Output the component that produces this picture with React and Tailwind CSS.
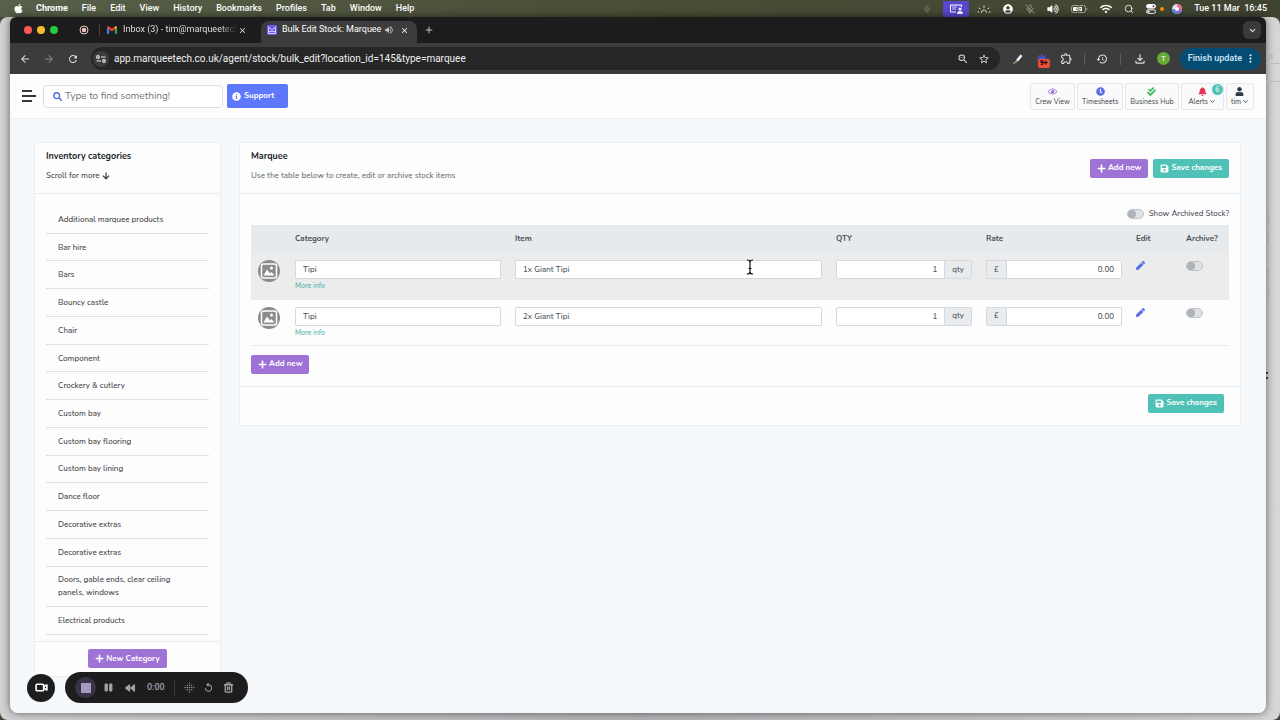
import React, { useState } from 'react';
import {
  FaApple,
  FaArrowDown,
  FaBackward,
  FaBell,
  FaCheckDouble,
  FaClock,
  FaInfoCircle,
  FaPause,
  FaPen,
  FaPlus,
  FaRegEye,
  FaSave,
  FaSearch,
  FaUser,
  FaUserCircle,
  FaVolumeUp,
  FaWifi,
} from 'react-icons/fa';
import {
  MdArrowBack,
  MdArrowForward,
  MdClose,
  MdHistory,
  MdMoreVert,
  MdOutlineExtension,
  MdOutlineFileDownload,
  MdRefresh,
  MdReplay,
  MdStarBorder,
  MdVolumeUp,
  MdZoomOut,
} from 'react-icons/md';
import { ChevronDown, Mic, MicOff, Plus, Search, Trash2, Video } from 'lucide-react';

const MENUS = ['File', 'Edit', 'View', 'History', 'Bookmarks', 'Profiles', 'Tab', 'Window', 'Help'];

const CATEGORIES = [
  'Additional marquee products',
  'Bar hire',
  'Bars',
  'Bouncy castle',
  'Chair',
  'Component',
  'Crockery & cutlery',
  'Custom bay',
  'Custom bay flooring',
  'Custom bay lining',
  'Dance floor',
  'Decorative extras',
  'Decorative extras',
  'Doors, gable ends, clear ceiling panels, windows',
  'Electrical products',
];

const STOCK = [
  { id: 1, category: 'Tipi', item: '1x Giant Tipi', qty: '1', rate: '0.00' },
  { id: 2, category: 'Tipi', item: '2x Giant Tipi', qty: '1', rate: '0.00' },
];

function MenuBar() {
  return (
    <div className="flex h-[17px] shrink-0 items-center bg-linear-to-r from-[#56604a] via-[#4b4d35] to-[#3f4432] pr-[13px] pl-[13px] text-[9px] font-medium text-white">
      <FaApple className="mr-3 h-[11px] w-[11px]" />
      <nav aria-label="Application menu" className="flex items-center gap-[14px]">
        <span className="font-bold">Chrome</span>
        {MENUS.map((menu) => (
          <span key={menu}>{menu}</span>
        ))}
      </nav>
      <div className="ml-auto flex items-center gap-3">
        <Mic className="h-2 w-2 opacity-30" />
        <span className="flex h-4 w-[26px] items-center justify-center bg-[#5848d0]">
          <svg viewBox="0 0 14 10" className="h-[10px] w-[14px]" fill="none" stroke="currentColor">
            <path d="M7 8H1.5V1h11v2" />
            <path d="M3 3h5M3 5h4" strokeWidth=".7" />
            <circle cx="11" cy="5" r="1.5" fill="currentColor" stroke="none" />
            <path d="M8 10c0-4 6-4 6 0z" fill="currentColor" stroke="none" />
          </svg>
        </span>
        <svg viewBox="0 0 14 10" className="-ml-1 h-[10px] w-[14px]" fill="none" stroke="currentColor" strokeLinecap="round">
          <path d="M1 8h.8M12.200 8h.8M2.200 4l.8.8M11.800 4l-.8.800M7 2v1.200" />
          <path d="M4.500 8.500a2.500 2.500 0 0 1 5 0" strokeDasharray="1.500 1" />
        </svg>
        <FaUserCircle className="h-[10px] w-[10px]" />
        <MicOff className="h-[10px] w-[10px] opacity-50" />
        <FaVolumeUp className="h-[10px] w-3" />
        <svg viewBox="0 0 17 10" className="h-[10px] w-[17px]">
          <rect x=".5" y="1.500" width="14" height="7" rx="2" fill="none" stroke="#a5a792" />
          <path d="M2 3h9v4H2z" fill="#fff" />
          <path d="M15.500 4v2q1 0 1-1t-1-1z" fill="#a5a792" />
          <path d="M8.500 1L5 5.500h2.500L6.500 9 10 4.500H7.500z" fill="#fff" stroke="#454832" strokeWidth=".6" />
        </svg>
        <FaWifi className="h-[10px] w-3" />
        <Search className="h-[10px] w-[10px]" />
        <span className="flex items-center gap-1">
          <svg viewBox="0 0 10 10" className="h-[10px] w-[10px]" fill="none" stroke="currentColor">
            <rect x=".5" y=".5" width="9" height="3.600" rx="1.800" fill="currentColor" />
            <rect x=".5" y="5.800" width="9" height="3.600" rx="1.800" />
            <circle cx="7.500" cy="2.300" r="1" fill="#454832" stroke="none" />
            <circle cx="2.500" cy="7.600" r="1.200" fill="currentColor" stroke="none" />
          </svg>
          <span className="h-1 w-1 rounded-full bg-orange-400" />
        </span>
        <svg viewBox="0 0 10 10" className="-ml-1 h-[10px] w-[10px]">
          <circle cx="5" cy="5" r="5" fill="#e8dcf0" />
          <path d="M5 0a5 5 0 0 1 5 5H5z" fill="#ef6a8d" />
          <path d="M0 5a5 5 0 0 0 5 5V5z" fill="#4b93ea" />
          <path d="M5 10a5 5 0 0 0 5-5H5z" fill="#a864dc" />
          <circle cx="5" cy="5" r="2" fill="#fff" />
        </svg>
        <span className="whitespace-pre">Tue 11 Mar  16:45</span>
      </div>
    </div>
  );
}

function TabStrip() {
  return (
    <div className="flex h-[26px] items-end bg-[#1c1c1c] pr-[5px] text-[9px] text-[#dedede]">
      <div className="flex h-full items-center gap-[5px] pl-[14px]">
        <span className="h-2 w-2 rounded-full bg-[#fb5b57]" />
        <span className="h-2 w-2 rounded-full bg-[#f9bc2e]" />
        <span className="h-2 w-2 rounded-full bg-[#2bc840]" />
      </div>
      <div className="ml-[21px] flex h-full items-center">
        <svg viewBox="0 0 10 10" className="h-[10px] w-[10px]">
          <circle cx="5" cy="5" r="4" fill="none" stroke="#e9c6c8" />
          <circle cx="5" cy="5" r="2.200" fill="#f0c4c6" />
        </svg>
        <span className="ml-[10px] h-3 w-px bg-[#4a4037]" />
      </div>
      <div className="flex h-full w-[161px] items-center pl-[7px]">
        <svg viewBox="0 0 12 9" className="mr-[6px] h-2 w-[10px] shrink-0">
          <path d="M0 1.500V9h2.600V4.200z" fill="#4285f4" />
          <path d="M12 1.500V9H9.400V4.200z" fill="#34a853" />
          <path d="M0 1.500C0 0 1.500-.5 2.600.4L6 3l3.400-2.600v3.300L6 6.300 0 2z" fill="#ea4335" />
          <path d="M9.400.4C10.500-.5 12 0 12 1.500V2L9.400 4z" fill="#fbbc04" />
        </svg>
        <span className="w-[114px] mask-r-from-85% whitespace-nowrap">Inbox (3) - tim@marqueetech</span>
        <button aria-label="Close Inbox tab" className="ml-px">
          <MdClose className="h-[9px] w-[9px]" />
        </button>
      </div>
      <div className="flex h-[22px] w-[156px] items-center rounded-t-lg bg-[#3c3c3c] pb-1 pl-[6px] text-white">
        <svg viewBox="0 0 10 10" className="mr-[5px] h-[10px] w-[10px] shrink-0">
          <rect width="10" height="10" rx="1" fill="#6a5cf0" />
          <path d="M1.500 8.500V2L5 5l3.500-3v6.500zM2 6.500h6" fill="none" stroke="#d9d4ff" strokeWidth=".9" />
        </svg>
        <span className="w-[102px] whitespace-nowrap">Bulk Edit Stock: Marquee</span>
        <MdVolumeUp className="h-[10px] w-[10px] text-[#c8c8c8]" />
        <button aria-label="Close Bulk Edit Stock tab" className="ml-[6px]">
          <MdClose className="h-[9px] w-[9px]" />
        </button>
      </div>
      <button aria-label="New tab" className="ml-[7px] flex h-full items-center">
        <Plus className="h-[10px] w-[10px]" />
      </button>
      <div className="ml-auto flex h-full items-center">
        <button aria-label="Search tabs" className="flex h-[18px] w-[18px] items-center justify-center rounded-md bg-[#3a3a3a]">
          <ChevronDown className="h-[9px] w-[9px]" strokeWidth={3} />
        </button>
      </div>
    </div>
  );
}

function AddressBar() {
  return (
    <div className="flex h-[31px] items-center bg-[#3c3c3c] pr-[5px] pl-[9px] text-[#dcdcdc]">
      <button aria-label="Back">
        <MdArrowBack className="h-3 w-3" />
      </button>
      <button aria-label="Forward" className="ml-3 text-[#858585]">
        <MdArrowForward className="h-3 w-3" />
      </button>
      <button aria-label="Reload" className="mr-3 ml-3">
        <MdRefresh className="h-3 w-3" />
      </button>
      <div className="flex h-[23px] min-w-0 flex-1 items-center rounded-full bg-[#262626] pr-[10px] pl-[2px]">
        <span className="mr-[5px] flex h-4 w-4 shrink-0 items-center justify-center rounded-full bg-[#3c3c3c]">
          <svg viewBox="0 0 10 8" className="h-2 w-[10px]" fill="none" stroke="#e6e6e6" strokeWidth="1.200">
            <circle cx="2" cy="2" r="1.300" />
            <path d="M5 2h4.500M.5 6H5" />
            <circle cx="8" cy="6" r="1.300" />
          </svg>
        </span>
        <input
          aria-label="Address"
          className="min-w-0 flex-1 bg-transparent text-[10px] text-[#f0f0f0] outline-none"
          defaultValue="app.marqueetech.co.uk/agent/stock/bulk_edit?location_id=145&type=marquee"
        />
        <MdZoomOut className="h-3 w-3" />
        <MdStarBorder className="ml-[9px] h-3 w-3" />
      </div>
      <svg viewBox="0 0 10 10" className="ml-[13px] h-[10px] w-[10px]">
        <path d="M3 6l4.500-5.500L9.500 2 5 7.500z" fill="#f4f4f4" />
        <path d="M2.500 6.500L4.500 8 2 9z" fill="#b9b9b9" />
        <path d="M0 9.500l1-1.500 1 1.500z" fill="#f7e34b" />
      </svg>
      <span className="relative ml-[14px] flex h-4 w-[14px] items-center">
        <svg viewBox="0 0 10 10" className="h-[10px] w-[10px]" stroke="#5a4fdc" strokeWidth="1.300">
          <path d="M5 0v10M0 5h10M1.500 1.500l7 7M8.500 1.500l-7 7" />
        </svg>
        <span className="absolute top-2 left-[1px] rounded-xs bg-[#e84f3d] px-[2px] text-[7px] leading-[9px] font-bold text-black">9+</span>
      </span>
      <MdOutlineExtension className="ml-[9px] h-[13px] w-[13px]" />
      <span className="mx-[11px] h-3 w-px bg-[#5d5d5d]" />
      <MdHistory className="h-3 w-3" />
      <span className="mx-3 h-3 w-px bg-[#5d5d5d]" />
      <MdOutlineFileDownload className="h-[14px] w-[14px]" />
      <span className="mx-[10px] flex h-[13px] w-[13px] items-center justify-center rounded-full bg-[#67a83a] text-[8px] text-white">T</span>
      <button className="flex h-[22px] items-center gap-[2px] rounded-full bg-[#054c72] pr-1 pl-2 text-[9px] font-medium text-[#d3e9fb]">
        Finish update
        <MdMoreVert className="h-[13px] w-[13px]" />
      </button>
    </div>
  );
}

function HeaderButton({ icon, label, menu, badge }) {
  return (
    <button className={`relative flex h-[27px] flex-col items-center justify-between rounded-xs border border-[#e6e7ea] bg-[#fafafa] py-[3px] text-[7px] leading-[9px] text-[#3b3f45] ${badge ? 'px-[7px]' : 'px-1'}`}>
      {icon}
      <span className="flex items-center gap-px whitespace-nowrap">
        {label}
        {menu && <ChevronDown className="h-[7px] w-[7px]" strokeWidth={3} />}
      </span>
      {badge && (
        <span className="absolute top-0 right-0 flex h-[11px] w-[11px] items-center justify-center rounded-full bg-[#4fc1b6] text-[7px] text-white">
          {badge}
        </span>
      )}
    </button>
  );
}

function AppHeader() {
  return (
    <header className="flex h-[45px] items-center border-b border-[#edf0f5] bg-[#fdfdfd] pr-3 pl-3">
      <button aria-label="Toggle menu" className="mr-[7px] flex w-[14px] flex-col gap-[3px]">
        <span className="h-[2px] w-[10px] bg-[#33373c]" />
        <span className="h-[2px] w-[14px] bg-[#33373c]" />
        <span className="h-[2px] w-[10px] bg-[#33373c]" />
      </button>
      <label className="flex h-[23px] w-[180px] items-center rounded-sm border border-[#dcdfe2] bg-white pl-[9px]">
        <FaSearch className="mr-[3px] h-[9px] w-[9px] text-[#4f68dc]" />
        <input
          aria-label="Search"
          className="min-w-0 flex-1 text-[10px] text-[#495057] outline-none placeholder:text-[#6f7780]"
          placeholder="Type to find something!"
        />
      </label>
      <button className="ml-1 flex h-6 items-center gap-[3px] rounded-xs bg-[#5d78fb] px-[5px] text-[8px] font-bold text-white">
        <FaInfoCircle className="h-[9px] w-[9px]" />
        Support
        <ChevronDown className="h-[6px] w-[6px] text-[#3a55d2]" strokeWidth={3} />
      </button>
      <div className="ml-auto flex gap-[2px]">
        <HeaderButton icon={<FaRegEye className="h-[9px] w-[9px] text-[#9a6bdb]" />} label="Crew View" />
        <HeaderButton icon={<FaClock className="h-[9px] w-[9px] text-[#5a6fe8]" />} label="Timesheets" />
        <HeaderButton icon={<FaCheckDouble className="h-[9px] w-[9px] text-[#45bd68]" />} label="Business Hub" />
        <HeaderButton icon={<FaBell className="h-[9px] w-[9px] text-[#e5315c]" />} label="Alerts" menu badge="6" />
        <HeaderButton icon={<FaUser className="h-[9px] w-[9px] text-[#2e3a4a]" />} label="tim" menu />
      </div>
    </header>
  );
}

function Button({ tone, icon, children }) {
  const tones = {
    purple: 'bg-[#9f73d6]',
    teal: 'bg-[#4fc1b6]',
  };
  return (
    <button className={`flex h-[19px] items-center gap-[2px] rounded-xs px-[7px] text-[8px] font-bold whitespace-nowrap text-white ${tones[tone]}`}>
      {icon}
      {children}
    </button>
  );
}

const AddNew = () => (
  <Button tone="purple" icon={<FaPlus className="h-[9px] w-[9px]" />}>
    Add new
  </Button>
);

const SaveChanges = () => (
  <Button tone="teal" icon={<FaSave className="h-[9px] w-[9px]" />}>
    Save changes
  </Button>
);

function Toggle(props) {
  return (
    <input
      type="checkbox"
      role="switch"
      className="block h-[10px] w-[17px] appearance-none rounded-full border border-[#bfc4c9] bg-[#dfe2e5] before:block before:h-2 before:w-2 before:rounded-full before:bg-[#adb3b9] checked:bg-[#4fc1b6] checked:before:ml-[7px]"
      {...props}
    />
  );
}

function Sidebar() {
  return (
    <aside className="w-[187px] shrink-0 border border-[#edf0f3] bg-[#fdfdfd] text-[8px] font-medium text-[#3f454b]">
      <div className="flex h-[51px] flex-col gap-[6px] border-b border-[#e9ecef] px-[11px] pt-[7px]">
        <h2 className="text-[9px] leading-[13px] font-bold text-[#212529]">Inventory categories</h2>
        <p className="flex items-center gap-[2px] leading-[13px]">
          Scroll for more <FaArrowDown className="h-2 w-2" />
        </p>
      </div>
      <ul className="mx-[11px] mt-3 mb-[6px] flex h-[429px] flex-col overflow-y-auto">
        {CATEGORIES.map((name, i) => (
          <li key={i} className="flex grow items-center border-b border-[#dfe2e5] px-3 py-[6px]">
            <a href="#" className="pr-4 leading-[13px]">
              {name}
            </a>
          </li>
        ))}
      </ul>
      <div className="flex justify-center border-t border-[#e9ecef] pt-[7px] pb-2">
        <Button tone="purple" icon={<FaPlus className="h-[9px] w-[9px]" />}>
          New Category
        </Button>
      </div>
    </aside>
  );
}

function ItemImage() {
  return (
    <svg viewBox="0 0 22 22" className="h-[22px] w-[22px]">
      <circle cx="11" cy="11" r="11" fill="#8b8b8b" />
      <rect x="3.500" y="4" width="15" height="14" rx="2" fill="none" stroke="#fff" strokeWidth="1.500" />
      <path d="M5.500 15.500L9 9.500l3 4 1.500-1.500 3 3.500z" fill="#fff" />
      <circle cx="13.500" cy="8" r="1.500" fill="#fff" />
    </svg>
  );
}

function StockRow({ row, pointer }) {
  const field = 'block h-[19px] w-full min-w-0 border border-[#d5d9dd] bg-white px-[7px] text-[8px] font-medium text-[#495057] outline-none';
  const addon = 'flex h-[19px] items-center border border-[#d5d9dd] bg-[#e9ecef] px-[7px]';
  return (
    <tr className="h-[46px] border-b border-[#e9ecef] align-top odd:bg-[#ececec]">
      <td className="px-[7px] pt-[7px]">
        <ItemImage />
      </td>
      <td className="px-[7px] pt-[7px]">
        <input aria-label="Category" className={`${field} rounded-xs`} defaultValue={row.category} />
        <a href="#" className="block pt-[2px] text-[7px] leading-[9px] text-[#4db3a6]">
          More info
        </a>
      </td>
      <td className="relative px-[7px] pt-[7px]">
        <input aria-label="Item" className={`${field} rounded-xs`} defaultValue={row.item} />
        {pointer && (
          <svg viewBox="0 0 8 16" className="absolute top-[6px] left-[74%] h-4 w-2" fill="none" stroke="#111" strokeWidth="1.200">
            <path d="M1 1q3 0 3 2v10q0 2-3 2M7 1q-3 0-3 2v10q0 2 3 2M2.500 9.500h3" />
          </svg>
        )}
      </td>
      <td className="px-[7px] pt-[7px]">
        <div className="flex">
          <input aria-label="Quantity" className={`${field} rounded-l-xs text-right`} defaultValue={row.qty} />
          <span className={`${addon} rounded-r-xs border-l-0`}>qty</span>
        </div>
      </td>
      <td className="px-[7px] pt-[7px]">
        <div className="flex">
          <span className={`${addon} rounded-l-xs border-r-0`}>£</span>
          <input aria-label="Rate" className={`${field} rounded-r-xs text-right`} defaultValue={row.rate} />
        </div>
      </td>
      <td className="px-[7px] pt-2">
        <button aria-label={`Edit ${row.item}`} className="block">
          <FaPen className="h-[9px] w-[9px] text-[#5a6fe8]" />
        </button>
      </td>
      <td className="px-[7px] pt-2">
        <Toggle aria-label={`Archive ${row.item}`} />
      </td>
    </tr>
  );
}

function StockEditor() {
  const [showArchived, setShowArchived] = useState(false);

  return (
    <main className="min-w-0 flex-1 self-start border border-[#edf0f3] bg-[#fdfdfd] text-[8px] font-medium text-[#495057]">
      <div className="flex h-[51px] justify-between border-b border-[#e9ecef] px-[11px]">
        <div className="flex flex-col gap-[6px] pt-[7px]">
          <h1 className="text-[9px] leading-[13px] font-bold text-[#212529]">Marquee</h1>
          <p className="leading-[13px] text-[#6a7178]">Use the table below to create, edit or archive stock items</p>
        </div>
        <div className="flex items-center gap-[5px]">
          <AddNew />
          <SaveChanges />
        </div>
      </div>

      <div className="px-[11px] pt-[13px] pb-3">
        <label className="mb-[5px] flex items-center justify-end gap-[5px] leading-[13px]">
          <Toggle checked={showArchived} onChange={(e) => setShowArchived(e.target.checked)} />
          Show Archived Stock?
        </label>
        <table className="w-full table-fixed border-collapse">
          <thead>
            <tr className="h-7 bg-[#e7eaed] text-left">
              <th className="w-[37px]" aria-label="Image" />
              <th className="w-[22.5%] px-[7px] font-bold">Category</th>
              <th className="px-[7px] font-bold">Item</th>
              <th className="w-[150px] px-[7px] font-bold">QTY</th>
              <th className="w-[150px] px-[7px] font-bold">Rate</th>
              <th className="w-[50px] px-[7px] font-bold">Edit</th>
              <th className="w-[50px] px-[7px] font-bold">Archive?</th>
            </tr>
          </thead>
          <tbody>
            {STOCK.map((row, i) => (
              <StockRow key={row.id} row={row} pointer={i === 0} />
            ))}
          </tbody>
        </table>
        <div className="mt-[9px] flex">
          <AddNew />
        </div>
      </div>

      <div className="flex justify-end border-t border-[#e9ecef] px-4 pt-[7px] pb-3">
        <SaveChanges />
      </div>
    </main>
  );
}

function Recorder() {
  return (
    <div className="absolute bottom-[17px] left-[27px] flex items-center gap-[10px] text-[#a29fa8]">
      <button aria-label="Camera" className="flex h-7 w-7 items-center justify-center rounded-full bg-[#1d1d1d] text-white">
        <Video className="h-[13px] w-[13px]" strokeWidth={3} />
      </button>
      <div className="flex h-[31px] items-center rounded-full bg-[#1d1d1d] pr-[14px] pl-[10px] text-[9px] font-medium">
        <button aria-label="Stop" className="flex h-[21px] w-[21px] items-center justify-center rounded-full bg-[#3a3345]">
          <span className="h-[10px] w-[10px] bg-[#a697bd]" />
        </button>
        <button aria-label="Pause" className="ml-2">
          <FaPause className="h-[9px] w-[9px]" />
        </button>
        <button aria-label="Rewind" className="ml-3">
          <FaBackward className="h-[10px] w-[10px]" />
        </button>
        <span className="ml-3">0:00</span>
        <span className="mx-[9px] h-4 w-px bg-[#3b3b3b]" />
        <svg viewBox="0 0 10 10" className="h-[11px] w-[11px]" fill="currentColor">
          {[1, 3, 5, 7, 9].map((y) =>
            [1, 3, 5, 7, 9].map((x) => (
              <circle key={`${x}-${y}`} cx={x} cy={y} r={Math.abs(x - 5) + Math.abs(y - 5) > 5 ? 0.2 : 0.6} />
            ))
          )}
        </svg>
        <button aria-label="Restart" className="ml-2">
          <MdReplay className="h-[11px] w-[11px]" />
        </button>
        <button aria-label="Delete" className="ml-[9px]">
          <Trash2 className="h-[11px] w-[11px]" strokeWidth={3} />
        </button>
      </div>
    </div>
  );
}

// Slice of the window that sits behind the browser, on the right edge of the desktop
function RearWindow() {
  return (
    <div className="absolute top-[17px] right-0 w-[14px] text-[8px] leading-[10px] text-[#a9a9a9]">
      <div className="border-b border-[#b9b9b9] pt-[35px] pb-[1px]">nt</div>
      <div className="h-[18px] border-b border-[#bdbdbd]" />
      <div className="flex flex-col gap-[7px] pt-[131px]">
        <span className="h-3 w-[3px] rounded-r-sm border border-l-0 border-[#a5a5a5]" />
        <span className="h-3 w-[3px] rounded-r-sm border border-l-0 border-[#a5a5a5]" />
        <span className="mt-4 h-3 w-[3px] rounded-r-sm border border-l-0 border-[#a5a5a5]" />
        <span className="h-3 w-[3px] rounded-r-sm border border-l-0 border-[#a5a5a5]" />
      </div>
      <div className="flex flex-col gap-[3px] pt-[74px]">
        <span className="h-[2px] w-[2px] bg-[#333]" />
        <span className="h-[2px] w-[2px] bg-[#333]" />
      </div>
    </div>
  );
}

export default function App() {
  return (
    <div className="relative flex min-h-screen flex-col bg-[#454a38] font-['Roboto','Liberation_Sans',sans-serif]">
      <MenuBar />
      <div className="flex flex-1 flex-col rounded-lg bg-linear-to-r from-[#d2d2d2] via-[#b5b5b8] to-[#d6d6d6] pr-[14px] pb-[7px] pl-[10px]">
        <div className="flex flex-1 flex-col overflow-hidden rounded-t-md rounded-b-lg shadow-[0_0_8px_rgba(0,0,0,0.55)]">
          <TabStrip />
          <AddressBar />
          <div className="flex flex-1 flex-col bg-[#f4f8fb] font-['Nunito','Open_Sans',sans-serif]">
            <AppHeader />
            <div className="flex gap-[18px] pt-[23px] pr-[25px] pb-9 pl-6">
              <Sidebar />
              <StockEditor />
            </div>
          </div>
        </div>
      </div>
      <RearWindow />
      <Recorder />
    </div>
  );
}
